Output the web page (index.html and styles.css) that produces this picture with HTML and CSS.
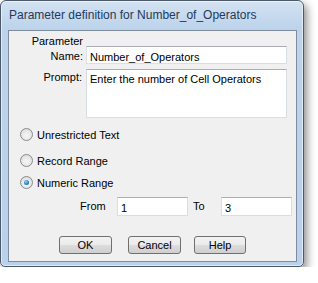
FILE: index.html
```html
<!DOCTYPE html>
<html lang="en">
<head>
  <meta charset="UTF-8">
  <title>Parameter definition</title>
  <link rel="stylesheet" href="styles.css">
</head>
<body>
  <div class="window">
    <div class="titlebar">Parameter definition for Number_of_Operators</div>
    <div class="client">
      <div class="field name-field">
        <div class="lbl">Parameter<br>Name:</div>
        <div class="textbox name-box">Number_of_Operators</div>
      </div>
      <div class="field prompt-field">
        <div class="lbl">Prompt:</div>
        <div class="textbox prompt-box">Enter the number of Cell Operators</div>
      </div>
      <div class="radio first"><span class="dot"></span>Unrestricted Text</div>
      <div class="radio second"><span class="dot"></span>Record Range</div>
      <div class="radio third"><span class="dot checked"></span>Numeric Range</div>
      <div class="range">
        <span class="range-lbl from-lbl">From</span>
        <div class="textbox num-box">1</div>
        <span class="range-lbl to-lbl">To</span>
        <div class="textbox num-box">3</div>
      </div>
      <div class="buttons">
        <div class="btn ok">OK</div>
        <div class="btn cancel">Cancel</div>
        <div class="btn help">Help</div>
      </div>
    </div>
  </div>
</body>
</html>
```

FILE: styles.css
```css
body {
  margin: 0;
  background: #fff;
  font-family: "Liberation Sans", Arial, sans-serif;
  font-size: 11px;
  color: #000;
}
.window {
  width: 304px;
  height: 267px;
  box-sizing: border-box;
  border: 1px solid #4b5968;
  border-radius: 6px 6px 5px 5px;
  background: linear-gradient(#d3e2f2, #bcd3eb 28px, #b9d1ea);
  box-shadow: inset 0 0 0 1px rgba(255,255,255,0.55), 3px 4px 8px rgba(0,0,0,0.45);
  padding: 0 6px 4px 7px;
}
.titlebar {
  height: 29px;
  line-height: 29px;
  font-size: 12px;
  color: #1e395b;
  padding-left: 1px;
  white-space: nowrap;
}
.client {
  height: 232px;
  box-sizing: border-box;
  background: #f0f0f0;
  border: 1px solid #7f8c9b;
  padding-top: 3px;
}
.field {
  display: flex;
  align-items: flex-end;
}
.lbl {
  width: 74px;
  margin-right: 3px;
  text-align: right;
  line-height: 15px;
}
.textbox {
  box-sizing: border-box;
  background: #fff;
  border: 1px solid #d9dee4;
  border-top-color: #abadb3;
  padding: 3px 0 0 3px;
  line-height: 15px;
  white-space: nowrap;
}
.name-box {
  width: 201px;
  height: 18px;
}
.prompt-field {
  align-items: flex-start;
  margin-top: 5px;
}
.prompt-field .lbl {
  padding-top: 1px;
  width: 73px;
  margin-right: 4px;
}
.prompt-box {
  width: 201px;
  height: 49px;
  padding-top: 2px;
}
.radio {
  display: flex;
  align-items: center;
  height: 15px;
  padding-left: 11px;
}
.radio.first { margin-top: 9px; }
.radio.second { margin-top: 11px; }
.radio.third { margin-top: 7px; }
.dot {
  width: 13px;
  height: 13px;
  box-sizing: border-box;
  border-radius: 50%;
  border: 1px solid #8b8b8b;
  background: radial-gradient(circle at 50% 60%, #f6f6f6 0, #e6e6e6 55%, #d2d2d2 100%);
  margin-right: 4px;
  position: relative;
}
.dot.checked::after {
  content: "";
  position: absolute;
  left: 3px;
  top: 3px;
  width: 5px;
  height: 5px;
  border-radius: 50%;
  background: radial-gradient(circle at 40% 35%, #8fd6f8 0, #2b8ccb 50%, #0d4f7e 100%);
}
.range {
  display: flex;
  align-items: center;
  margin-top: 7px;
}
.range-lbl { line-height: 15px; }
.from-lbl { margin-left: 71px; width: 37px; }
.to-lbl { margin-left: 5px; width: 28px; }
.num-box {
  width: 71px;
  height: 19px;
}
.buttons {
  display: flex;
  margin-top: 20px;
}
.btn {
  box-sizing: border-box;
  height: 18px;
  line-height: 16px;
  text-align: center;
  border: 1px solid #707070;
  border-radius: 3px;
  background: linear-gradient(#f2f2f2, #ebebeb 50%, #dddddd 50%, #cfcfcf);
}
.ok { width: 53px; margin-left: 50px; }
.cancel { width: 53px; margin-left: 16px; }
.help { width: 52px; margin-left: 13px; }
```
